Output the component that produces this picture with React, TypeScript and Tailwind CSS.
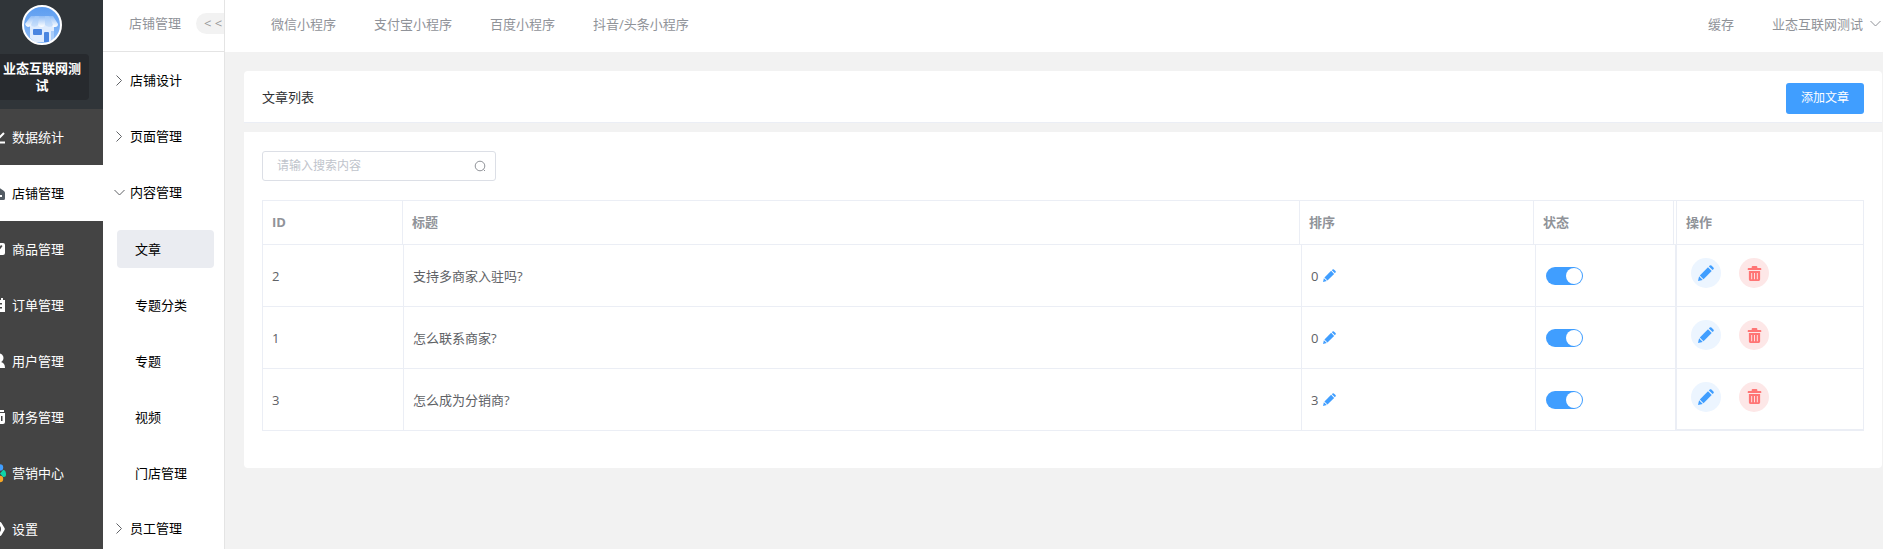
import { useState } from "react";
import type { ReactNode } from "react";

const mainNav: { label: string; icon: ReactNode }[] = [
  {
    label: "数据统计",
    icon: <path d="M0 13.500h16M5 8l3 3 7-7" fill="none" stroke="currentColor" strokeWidth="2" />,
  },
  {
    label: "店铺管理",
    icon: <path fillRule="evenodd" d="M8 1l7 5q1 .8 1 2v5.500q0 1.500-1.500 1.500h-13Q0 15 0 13.500V8q0-1.200 1-2zM5 10v2h8v-2z" />,
  },
  {
    label: "商品管理",
    icon: <path fillRule="evenodd" d="M2 2h12q2 0 2 2v8q0 2-2 2H2q-2 0-2-2V4q0-2 2-2zM4 5q4 9 9.500 0l-1.500-1q-3.500 6-6.500 0z" />,
  },
  {
    label: "订单管理",
    icon: <path fillRule="evenodd" d="M2 3h3V1h2v2h5V1h2v2h2v12H0V3zM4 6v1.500h9V6zM4 10v1.500h9V10z" />,
  },
  {
    label: "用户管理",
    icon: (
      <>
        <circle cx="10" cy="5" r="4.500" />
        <path d="M1 15q0-5 6-6h5q4 1 4 6z" />
      </>
    ),
  },
  {
    label: "财务管理",
    icon: <path fillRule="evenodd" d="M3 1h12v2H3zM0 4h16v9q0 2-2 2H0zM12 7v5h1.500V7z" />,
  },
  {
    label: "营销中心",
    icon: (
      <>
        <circle cx="3" cy="8" r="3" fill="#f56c6c" />
        <path d="M11 8.500l3-3.500q2.500-.5 3 3.500t-3 3.500z" fill="#0fd3a8" />
        <circle cx="11" cy="2.500" r="3.200" fill="#409eff" />
        <circle cx="11" cy="14" r="3.200" fill="#f9a825" />
      </>
    ),
  },
  {
    label: "设置",
    icon: <path fillRule="evenodd" d="M5 1h6q1 0 1.500 1L15.500 7q.6 1 0 2l-3 5q-.5 1-1.500 1H5q-1 0-1.500-1L.5 9q-.6-1 0-2l3-5Q4 1 5 1zM8 4a4 4 0 100 8 4 4 0 000-8z" />,
  },
];

const subNav = ["文章", "专题分类", "专题", "视频", "门店管理"];

const platforms = ["微信小程序", "支付宝小程序", "百度小程序", "抖音/头条小程序"];

const articles = [
  { id: 2, title: "支持多商家入驻吗?", sort: 0 },
  { id: 1, title: "怎么联系商家?", sort: 0 },
  { id: 3, title: "怎么成为分销商?", sort: 3 },
];

const Chevron = ({ down = false }: { down?: boolean }) => (
  <svg viewBox="0 0 13 13" className="size-[13px] shrink-0" fill="none" stroke="currentColor" aria-hidden="true">
    <path d={down ? "M1.500 4l5 5 5-5" : "M3.500 1.500l5 5-5 5"} />
  </svg>
);

const PencilIcon = ({ className }: { className: string }) => (
  <svg viewBox="0 0 16 16" className={className} fill="currentColor" aria-hidden="true">
    <path d="M10 2.300l3.700 3.700-8.200 8.200-3.700-3.700z" />
    <path d="M10.900 1.400l.8-.8q.8-.8 1.700 0l2 2q.8.900 0 1.700l-.8.800z" />
    <path d="M1.100 11.300l3.600 3.600L0 16z" />
  </svg>
);

const TrashIcon = ({ className }: { className: string }) => (
  <svg viewBox="0 0 16 16" className={className} fill="currentColor" aria-hidden="true">
    <path d="M5 2V1q0-1 1-1h4q1 0 1 1v1h3.500q.7 0 .7.700V4.200H.8V2.700Q.8 2 1.500 2z" />
    <path fillRule="evenodd" d="M2 5.200h12v9.300q0 1.500-1.500 1.500h-9Q2 16 2 14.500zM4.500 7.500v6.500h1V7.500zM7.500 7.500v6.500h1V7.500zM10.500 7.500v6.500h1V7.500z" />
  </svg>
);

const ShopLogo = () => (
  <svg viewBox="0 0 40 40" className="size-10" aria-hidden="true">
    <defs>
      <linearGradient id="sky" x1="0" y1="0" x2="0" y2="1">
        <stop offset="0" stopColor="#5b9cf0" />
        <stop offset="1" stopColor="#8dbcf8" />
      </linearGradient>
      <linearGradient id="awning" x1="0" y1="0" x2="0" y2="1">
        <stop offset="0" stopColor="#8fbcf6" />
        <stop offset="1" stopColor="#ffffff" />
      </linearGradient>
    </defs>
    <circle cx="20" cy="20" r="19" fill="url(#sky)" />
    <path d="M8 20h24v14l-6 3H13l-5-4z" fill="#dfecfe" />
    <path d="M9 11h22l5 8q0 3-3 3t-3-2q-1 2-3.500 2T23 20q-1 2-3.500 2T16 20q-1 2-3.500 2T9 20q-1 2-3 2t-3-3z" fill="url(#awning)" />
    <path d="M13 11h4l-1 9q-1 2-3.500 2T9 20zM23 11h4l4 9q-1 2-4 2t-4-2z" fill="#a9cdfa" opacity=".6" />
    <rect x="11" y="24" width="9" height="6" rx="1" fill="#4a85e0" />
    <path d="M22 37V28q0-1 1-1h3q1 0 1 1v9z" fill="#4a85e0" />
    <path d="M29 26h3v8l-3 2z" fill="#a9cdfa" />
    <circle cx="20" cy="20" r="19" fill="none" stroke="#fff" strokeWidth="2" />
  </svg>
);

const MainSidebar = () => (
  <aside className="w-[103px] shrink-0 overflow-hidden bg-[#444444] text-white">
    <div className="-ml-[19px]">
      <div className="flex h-[109px] flex-col items-center bg-[#303539] pt-[5px]">
        <ShopLogo />
        <div className="mt-[9px] w-[94px] rounded bg-[#272a2e] px-[5px] py-[6px] text-center font-bold leading-[17px]">
          业态互联网测试
        </div>
      </div>
      <nav>
        {mainNav.map((item) => (
          <a
            key={item.label}
            href="#"
            className={
              item.label === "店铺管理"
                ? "flex h-14 items-center gap-[7px] bg-white pl-2 text-black"
                : "flex h-14 items-center gap-[7px] pl-2"
            }
          >
            <svg
              viewBox="0 0 16 16"
              className={item.label === "店铺管理" ? "size-4 text-[#545c64]" : "size-4 overflow-visible"}
              fill="currentColor"
              aria-hidden="true"
            >
              {item.icon}
            </svg>
            {item.label}
          </a>
        ))}
      </nav>
    </div>
  </aside>
);

const groupClass = "flex h-14 w-full items-center gap-1 pl-[10px] text-left";

const SubSidebar = () => {
  const [open, setOpen] = useState(true);

  return (
    <aside className="w-[122px] shrink-0 overflow-hidden border-r border-[#e4e4e4] bg-white text-black">
      <div className="flex h-[52px] items-center justify-between border-b border-[#e4e4e4] pb-[5px] pl-[26px]">
        <span className="whitespace-nowrap text-[#909399]">店铺管理</span>
        <button
          type="button"
          aria-label="收起菜单"
          className="flex h-[21px] w-7 items-center rounded-l-full bg-[#f2f2f2] pl-2 text-[#999999]"
        >
          &lt;&nbsp;&lt;
        </button>
      </div>
      <nav>
        <button type="button" className={groupClass}>
          <span className="text-[#606266]">
            <Chevron />
          </span>
          店铺设计
        </button>
        <button type="button" className={groupClass}>
          <span className="text-[#606266]">
            <Chevron />
          </span>
          页面管理
        </button>
        <button type="button" className={groupClass} onClick={() => setOpen(!open)}>
          <span className="text-[#606266]">
            <Chevron down={open} />
          </span>
          内容管理
        </button>
        {open &&
          subNav.map((label) => (
            <div key={label} className="flex h-14 items-center pl-[14px] pr-[10px] pt-px">
              <a
                href="#"
                className={
                  label === "文章"
                    ? "flex h-[38px] w-full items-center rounded bg-[#eaecf1] pl-[18px]"
                    : "flex h-[38px] w-full items-center pl-[18px]"
                }
              >
                {label}
              </a>
            </div>
          ))}
        <button type="button" className={groupClass}>
          <span className="text-[#606266]">
            <Chevron />
          </span>
          员工管理
        </button>
      </nav>
    </aside>
  );
};

const TopBar = () => (
  <header className="flex h-[52px] items-center justify-between bg-white pb-[5px] pl-[46px] text-[#909399]">
    <nav className="flex gap-[38px]">
      {platforms.map((name) => (
        <a key={name} href="#">
          {name}
        </a>
      ))}
    </nav>
    <div className="flex items-center gap-[38px] pr-px">
      <button type="button">缓存</button>
      <button type="button" className="flex items-center gap-[6px]">
        业态互联网测试
        <Chevron down />
      </button>
    </div>
  </header>
);

const ArticleTable = () => (
  <table className="mt-[19px] w-full table-fixed border-separate border-spacing-0 border-l border-t border-[#ebeef5] text-[#606266]">
    <colgroup>
      <col className="w-[141px]" />
      <col />
      <col className="w-[234px]" />
      <col className="w-[140px]" />
      <col className="w-[188px]" />
    </colgroup>
    <thead>
      <tr className="text-left leading-[43px] text-[#909399]">
        <th className="border-b border-[#ebeef5] p-0">
          <div className="mr-px border-r border-[#ebeef5] pl-[9px]">ID</div>
        </th>
        <th className="border-b border-[#ebeef5] p-0">
          <div className="-ml-px mr-0.5 border-r border-[#ebeef5] pl-[9px]">标题</div>
        </th>
        <th className="border-b border-[#ebeef5] p-0">
          <div className="-ml-0.5 mr-0.5 border-r border-[#ebeef5] pl-[9px]">排序</div>
        </th>
        <th className="border-b border-[#ebeef5] p-0">
          <div className="-ml-0.5 mr-0.5 border-r border-[#ebeef5] pl-[9px]">状态</div>
        </th>
        <th className="border-x border-b border-[#ebeef5] p-0 pl-[9px]">操作</th>
      </tr>
    </thead>
    <tbody>
      {articles.map((article) => (
        <tr key={article.id} className="group h-[62px]">
          <td className="border-b border-r border-[#ebeef5] py-0 pl-[9px]">{article.id}</td>
          <td className="border-b border-r border-[#ebeef5] py-0 pl-[9px]">{article.title}</td>
          <td className="border-b border-r border-[#ebeef5] py-0 pl-[9px]">
            <div className="flex items-center gap-[5px]">
              {article.sort}
              <button type="button" aria-label="修改排序" className="text-[#409eff]">
                <PencilIcon className="size-[13px]" />
              </button>
            </div>
          </td>
          <td className="border-b border-r border-[#ebeef5] py-0 pl-[10px]">
            <input
              type="checkbox"
              defaultChecked
              aria-label="状态"
              className="block h-[18px] w-[37px] cursor-pointer appearance-none rounded-full bg-[#dcdfe6] p-px before:block before:size-4 before:rounded-full before:bg-white checked:bg-[#409eff] checked:before:ml-[19px]"
            />
          </td>
          <td className="border-x border-b border-[#ebeef5] pb-[5px] pl-[14px] pt-0 group-last:border-b-2">
            <div className="flex gap-[18px]">
              <button
                type="button"
                aria-label="编辑"
                className="flex size-[30px] items-center justify-center rounded-full bg-[#ecf5ff] text-[#409eff]"
              >
                <PencilIcon className="size-4" />
              </button>
              <button
                type="button"
                aria-label="删除"
                className="flex size-[30px] items-center justify-center rounded-full bg-[#fde7e7] text-[#ff7575]"
              >
                <TrashIcon className="size-[15px]" />
              </button>
            </div>
          </td>
        </tr>
      ))}
    </tbody>
  </table>
);

const App = () => {
  return (
    <div className="flex h-screen overflow-hidden bg-[#f2f2f2] font-['Open_Sans','Noto_Sans_CJK_SC',sans-serif] text-[13px] leading-5">
      <MainSidebar />
      <SubSidebar />
      <div className="min-w-0 flex-1">
        <TopBar />
        <main className="pl-[19px] pr-px pt-[19px]">
          <div className="flex h-[52px] items-center justify-between rounded-t border-b border-[#ebeef5] bg-white px-[18px]">
            <h1 className="text-[#303133]">文章列表</h1>
            <button type="button" className="mt-[3px] h-[31px] w-[78px] rounded-[3px] bg-[#409eff] text-xs text-white">
              添加文章
            </button>
          </div>

          <section className="mt-[9px] rounded-b bg-white px-[18px] pb-[37px] pt-[19px]">
            <div className="flex h-[30px] w-[234px] items-center rounded-[3px] border border-[#dcdfe6] pl-[14px] pr-[9px]">
              <input
                type="text"
                aria-label="搜索"
                placeholder="请输入搜索内容"
                className="min-w-0 flex-1 text-xs outline-none placeholder:text-[#c0c4cc]"
              />
              <svg viewBox="0 0 12 12" className="size-3 text-[#909399]" fill="none" stroke="currentColor" aria-hidden="true">
                <circle cx="6" cy="6" r="4.800" />
                <path d="M9.500 9.500l1.500 1.500" />
              </svg>
            </div>
            <ArticleTable />
          </section>
        </main>
      </div>
    </div>
  );
};

export default App;
